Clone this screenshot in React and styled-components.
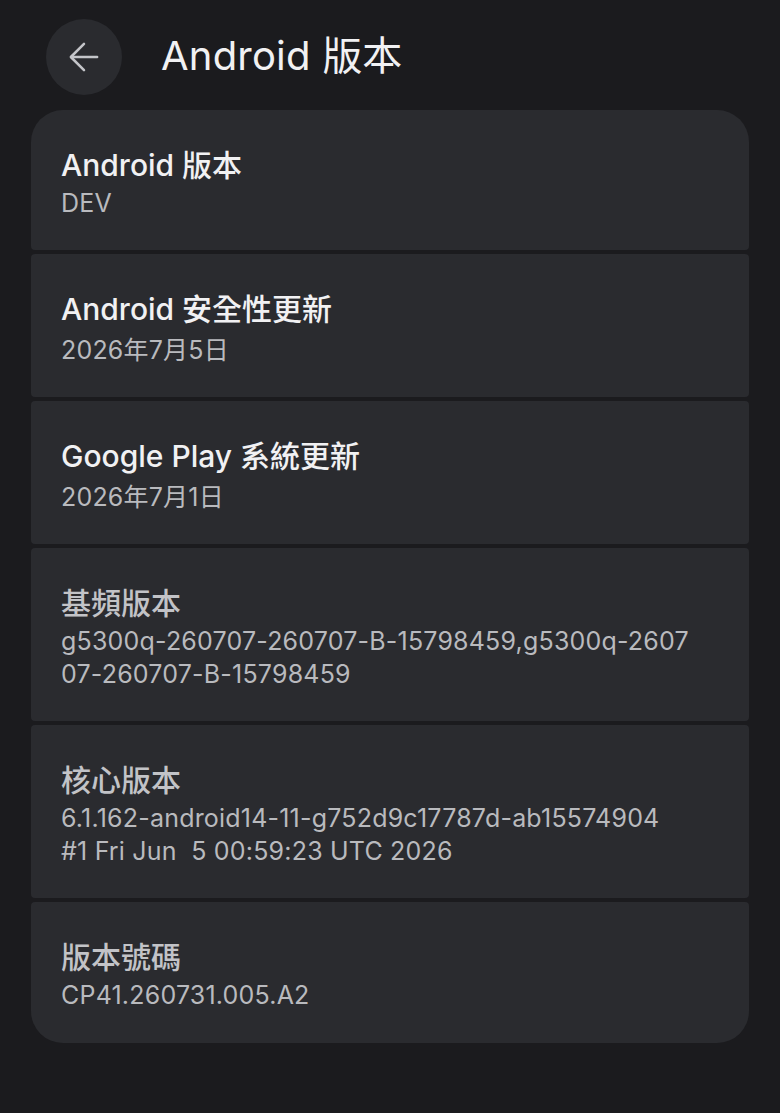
import React from 'react';
import styled, { createGlobalStyle } from 'styled-components';

const GlobalStyle = createGlobalStyle`
  html, body {
    margin: 0;
    padding: 0;
    background: #1b1b1e;
  }
  body {
    font-family: Inter, "Noto Sans CJK TC", sans-serif;
  }
`;

const items = [
  { title: 'Android 版本', lines: ['DEV'] },
  { title: 'Android 安全性更新', lines: ['2026年7月5日'], tall: true },
  { title: 'Google Play 系統更新', lines: ['2026年7月1日'], tall: true },
  { title: '基頻版本', lines: ['g5300q-260707-260707-B-15798459,g5300q-2607', '07-260707-B-15798459'], dim: true },
  { title: '核心版本', lines: ['6.1.162-android14-11-g752d9c17787d-ab15574904', '#1 Fri Jun  5 00:59:23 UTC 2026'], dim: true },
  { title: '版本號碼', lines: ['CP41.260731.005.A2'], dim: true },
];

const App = () => {
  return (
    <Page>
      <GlobalStyle />
      <Header>
        <BackButton aria-label="返回">
          <svg width="30" height="30" viewBox="0 0 32 32" fill="none" stroke="#c4c5c9" strokeWidth="2.7" strokeLinecap="round" strokeLinejoin="round">
            <path d="M30 16H2.5" />
            <path d="M16 2 2 16l14 14" />
          </svg>
        </BackButton>
        <HeaderTitle>Android 版本</HeaderTitle>
      </Header>
      <List>
        {items.map((item) => (
          <Card key={item.title}>
            <Title $dim={item.dim}>{item.title}</Title>
            <Value $tall={item.tall}>
              {item.lines.map((l) => (
                <Line key={l}>{l}</Line>
              ))}
            </Value>
          </Card>
        ))}
      </List>
    </Page>
  );
};

export default App;

const Page = styled.div`
  width: 780px;
  min-height: 1113px;
  background: #1b1b1e;
  box-sizing: border-box;
  padding: 19px 31px 0 31px;
`;

const Header = styled.div`
  display: flex;
  align-items: center;
  height: 76px;
  margin-left: 15px;
  margin-bottom: 15px;
`;

const BackButton = styled.button`
  width: 76px;
  height: 76px;
  border-radius: 50%;
  border: none;
  background: #2a2b2f;
  display: flex;
  align-items: center;
  justify-content: center;
  padding: 0;
  cursor: pointer;
`;

const HeaderTitle = styled.h1`
  margin: -2px 0 0 39px;
  font-size: 40px;
  font-weight: 400;
  color: #f1f1f3;
  letter-spacing: 0.2px;
  line-height: 1;
`;

const List = styled.div`
  display: flex;
  flex-direction: column;
  gap: 4px;
`;

const Card = styled.div`
  background: #2a2b2f;
  border-radius: 4px;
  padding: 35px 30px 30px 30px;

  &:first-child {
    border-radius: 32px 32px 4px 4px;
  }
  &:last-child {
    border-radius: 4px 4px 32px 32px;
    padding-bottom: 31px;
  }
`;

const Title = styled.div`
  font-size: 30px;
  font-weight: 500;
  line-height: 40px;
  color: ${(p) => (p.$dim ? '#c2c3c7' : '#f1f1f3')};
`;

const Value = styled.div`
  margin-top: ${(p) => (p.$tall ? '5px' : '2px')};
  font-size: 25px;
  letter-spacing: 0.2px;
  line-height: 33px;
  color: #b9babe;
`;

const Line = styled.div`
  white-space: pre;
`;
